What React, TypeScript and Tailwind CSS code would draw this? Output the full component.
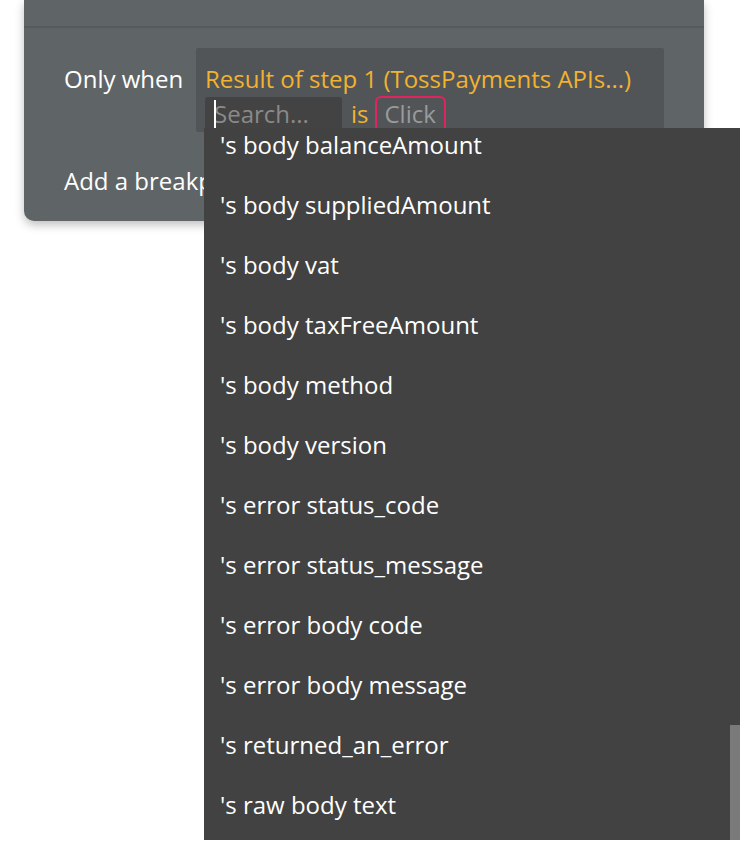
import React from 'react';

const items = [
  "'s body balanceAmount",
  "'s body suppliedAmount",
  "'s body vat",
  "'s body taxFreeAmount",
  "'s body method",
  "'s body version",
  "'s error status_code",
  "'s error status_message",
  "'s error body code",
  "'s error body message",
  "'s returned_an_error",
  "'s raw body text",
];

export default function App() {
  return (
    <div
      className="relative w-[754px] h-[850px] overflow-hidden bg-white text-[24px]"
      style={{ fontFamily: '"Open Sans", sans-serif' }}
    >
      {/* Workflow panel */}
      <div className="ml-[24px] w-[680px] h-[221px] rounded-b-[10px] bg-[#5f6567] shadow-[0_4px_10px_rgba(0,0,0,0.25)]">
        <div className="h-[28px] border-b-2 border-[#555a5c]" />
        <div className="flex items-start pt-[20px] pl-[40px]">
          <span className="mt-[16px] w-[132px] text-white leading-[30px]">Only when</span>
          <div className="w-[468px] h-[84px] rounded-[2px] bg-[#515557] pl-[9px] pt-[16px]">
            <div className="leading-[30px] text-[#f2b230]">Result of step 1 (TossPayments APIs...)</div>
            <div className="flex items-center mt-[2px]">
              <div className="relative w-[137px] h-[34px] rounded-t-[3px] bg-[#434343] pl-[9px] text-[#8a8a8a] leading-[34px]">
                <span className="absolute left-[9px] top-[3px] w-[2px] h-[30px] bg-white" />
                Search...
              </div>
              <span className="ml-[9px] text-[#f2b230] leading-[34px]">is</span>
              <div className="ml-[6px] h-[36px] px-[8px] rounded-[6px] border-2 border-[#e0245e] text-[#9a9a9a] leading-[32px]">
                Click
              </div>
            </div>
          </div>
        </div>
        <div className="pl-[40px] mt-[34px] text-white leading-[30px]">Add a breakpoint in debug mode</div>
      </div>

      {/* Dropdown list */}
      <div className="absolute left-[204px] top-[128px] w-[536px] h-[712px] bg-[#424242] overflow-hidden">
        <div className="-mt-[13px]">
          {items.map((t) => (
            <div key={t} className="h-[60px] pl-[16px] flex items-center text-white">
              {t}
            </div>
          ))}
        </div>
        <div className="absolute right-0 top-[597px] w-[10px] h-[115px] bg-[#7a7a7a]" />
      </div>
    </div>
  );
}
